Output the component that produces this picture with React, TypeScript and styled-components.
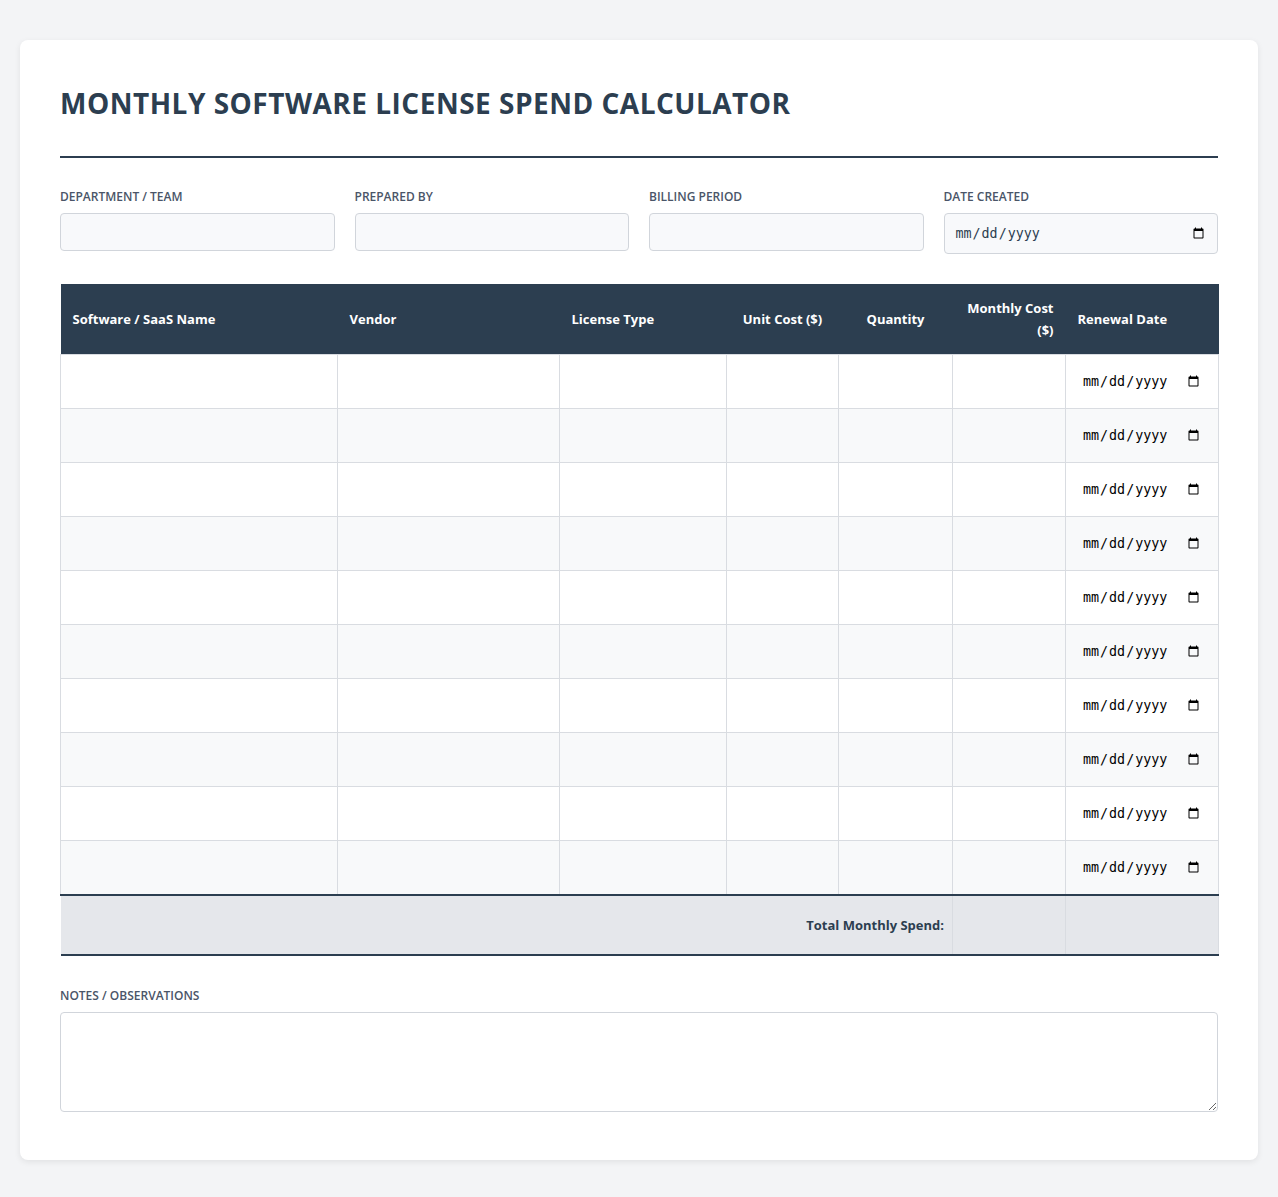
import styled, { createGlobalStyle } from "styled-components";

const GlobalStyle = createGlobalStyle`
	* {
		box-sizing: border-box;
	}

	body {
		margin: 0;
		padding: 40px 20px;
		background-color: #f3f4f6;
		font-family: "Open Sans", "Noto Sans", sans-serif;
		color: #2c3e50;
	}
`;

const Card = styled.div`
	background-color: #ffffff;
	border-radius: 8px;
	box-shadow: 0 2px 6px rgba(0, 0, 0, 0.08);
	padding: 40px 40px 48px;
`;

const Header = styled.header`
	border-bottom: 2px solid #2c3e50;
	padding-bottom: 30px;
	margin-bottom: 31px;
`;

const Title = styled.h1`
	margin: 0;
	font-size: 28px;
	line-height: 46px;
	font-weight: 700;
	letter-spacing: 0.5px;
	text-transform: uppercase;
	color: #2c3e50;
`;

const MetaGrid = styled.div`
	display: grid;
	grid-template-columns: repeat(4, 1fr);
	gap: 20px;
	align-items: start;
	margin-bottom: 30px;
`;

const Field = styled.div`
	display: flex;
	flex-direction: column;
`;

const Label = styled.label`
	font-size: 12px;
	line-height: 16px;
	font-weight: 600;
	text-transform: uppercase;
	color: #4a5568;
	margin-bottom: 8px;
`;

const MetaInput = styled.input<{ $tall?: boolean }>`
	width: 100%;
	height: ${(p) => (p.$tall ? 41 : 38)}px;
	padding: 0 10px;
	border: 1px solid #d1d5db;
	border-radius: 4px;
	background-color: #f8f9fb;
	color: #2c3e50;
`;

const Table = styled.table`
	width: 100%;
	border-collapse: collapse;
	table-layout: fixed;
	margin-bottom: 32px;
`;

const Col = styled.col<{ $w: number }>`
	width: ${(p) => p.$w}px;
`;

const HeadCell = styled.th<{ $align?: "left" | "center" | "right" }>`
	background-color: #2c3e50;
	color: #ffffff;
	font-size: 13px;
	line-height: 22px;
	font-weight: 700;
	text-align: ${(p) => p.$align || "left"};
	padding: 13px 12px;
	height: 70px;
`;

const Row = styled.tr<{ $odd: boolean }>`
	background-color: ${(p) => (p.$odd ? "#f8f9fa" : "#ffffff")};
`;

const Cell = styled.td`
	border: 1px solid #d9dce1;
	height: 54px;
	padding: 0 8px;
`;

const CellInput = styled.input`
	width: 100%;
	height: 36px;
	border: none;
	background: transparent;
	padding: 0 8px;
	outline: none;
`;

const TotalRow = styled.tr`
	background-color: #e5e7eb;
	border-top: 2px solid #2c3e50;
	border-bottom: 2px solid #2c3e50;
`;

const TotalLabel = styled.td`
	text-align: right;
	font-size: 13px;
	font-weight: 700;
	color: #2c3e50;
	padding: 0 8px;
	height: 60px;
`;

const TotalCell = styled.td`
	border-left: 1px solid #d9dce1;
	border-right: 1px solid #d9dce1;
`;

const Notes = styled.textarea`
	display: block;
	width: 100%;
	height: 100px;
	border: 1px solid #d1d5db;
	border-radius: 4px;
	background-color: #ffffff;
	padding: 10px;
	resize: vertical;
`;

const columns: { name: string; width: number; align?: "left" | "center" | "right" }[] = [
	{ name: "Software / SaaS Name", width: 277 },
	{ name: "Vendor", width: 222 },
	{ name: "License Type", width: 167 },
	{ name: "Unit Cost ($)", width: 112, align: "center" },
	{ name: "Quantity", width: 114, align: "center" },
	{ name: "Monthly Cost ($)", width: 113, align: "right" },
	{ name: "Renewal Date", width: 153 },
];

const rows = Array.from({ length: 10 }, (_, i) => i);

function App() {
	return <>
		<GlobalStyle />
		<Card>
			<Header>
				<Title>Monthly Software License Spend Calculator</Title>
			</Header>

			<MetaGrid>
				<Field>
					<Label>Department / Team</Label>
					<MetaInput type="text" />
				</Field>
				<Field>
					<Label>Prepared By</Label>
					<MetaInput type="text" />
				</Field>
				<Field>
					<Label>Billing Period</Label>
					<MetaInput type="text" />
				</Field>
				<Field>
					<Label>Date Created</Label>
					<MetaInput type="date" $tall />
				</Field>
			</MetaGrid>

			<Table>
				<colgroup>
					{columns.map((c) => <Col key={c.name} $w={c.width} />)}
				</colgroup>
				<thead>
					<tr>
						{columns.map((c) => <HeadCell key={c.name} $align={c.align}>{c.name}</HeadCell>)}
					</tr>
				</thead>
				<tbody>
					{rows.map((r) => (
						<Row key={r} $odd={r % 2 === 1}>
							<Cell><CellInput type="text" /></Cell>
							<Cell><CellInput type="text" /></Cell>
							<Cell><CellInput type="text" /></Cell>
							<Cell><CellInput type="number" /></Cell>
							<Cell><CellInput type="number" /></Cell>
							<Cell></Cell>
							<Cell><CellInput type="date" /></Cell>
						</Row>
					))}
				</tbody>
				<tfoot>
					<TotalRow>
						<TotalLabel colSpan={5}>Total Monthly Spend:</TotalLabel>
						<TotalCell></TotalCell>
						<TotalCell></TotalCell>
					</TotalRow>
				</tfoot>
			</Table>

			<Field>
				<Label>Notes / Observations</Label>
				<Notes />
			</Field>
		</Card>
	</>;
}

export default App;
